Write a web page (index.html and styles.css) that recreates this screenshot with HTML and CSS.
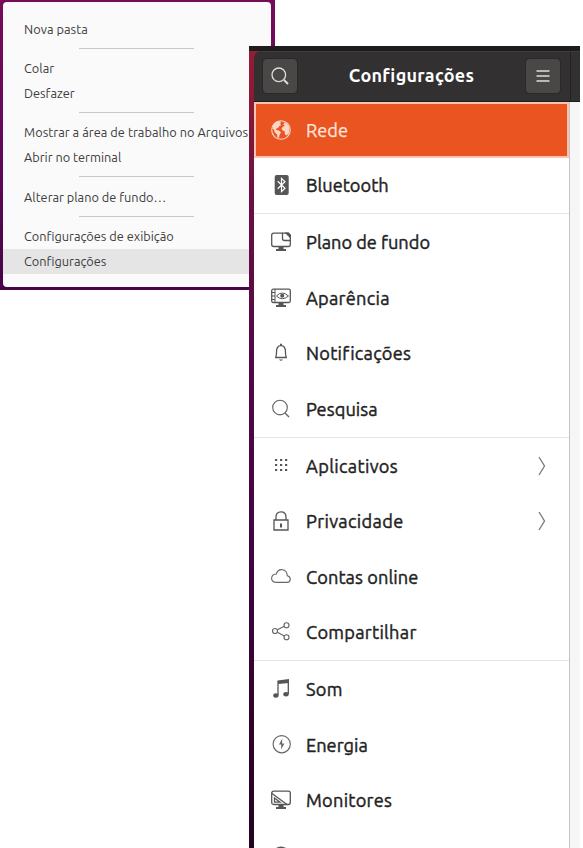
FILE: index.html
```html
<!DOCTYPE html>
<html lang="pt-BR">
<head>
<meta charset="utf-8">
<title>Configurações</title>
<link rel="stylesheet" href="styles.css">
</head>
<body>
<div class="desktop">
  <nav class="menu">
    <a class="entry s1">Nova pasta</a>
    <hr>
    <a class="entry">Colar</a>
    <a class="entry">Desfazer</a>
    <hr>
    <a class="entry s1">Mostrar a área de trabalho no Arquivos</a>
    <a class="entry">Abrir no terminal</a>
    <hr>
    <a class="entry">Alterar plano de fundo…</a>
    <hr>
    <a class="entry">Configurações de exibição</a>
    <a class="entry active">Configurações</a>
  </nav>
</div>
<div class="shot">
  <div class="topbar"></div>
  <div class="window">
    <div class="main">
      <header class="header">
        <button class="btn"><svg width="18" height="18" viewBox="0 0 18 18"><circle cx="7.800" cy="7.800" r="6.800"/><path d="M13 13l4 4" stroke-width="2"/></svg></button>
        <h1>Configurações</h1>
        <button class="btn"><svg width="14" height="14" viewBox="0 0 14 14"><path d="M.5 2h13M.5 7h13M.5 12h13" stroke-width="1.700"/></svg></button>
      </header>
      <ul class="list">
        <li class="row selected"><svg class="ico" viewBox="0 0 20 20"><circle cx="10" cy="10" r="9.300"/><path class="fill" d="M2 5L5 2l4-1 1 1.500-1 1.500 1.500 1-2 1-1.500 2-1.500.5-.5 1.500 3 .5 2 2-1.500 2.500L8 18l-1.500-.5-.5-3-2.500-2.500-.5-2.500L1.500 9zM13 2.500l3 1 2.500 4-.5 5.500-2.500 2.500-1.500-1-.5-3.500-2-.5-1-2 1.500-2 2-.5-1.500-1z"/></svg><span>Rede</span></li>
        <li class="row"><svg class="ico" viewBox="0 0 20 20"><rect class="fill" x="3.700" y="0" width="14" height="20" rx="2"/><path d="M6.700 6.300l7.300 7-3.500 3.400V3.300L14 6.700l-7.300 7" stroke="#fff" stroke-width="1.200"/></svg><span>Bluetooth</span></li>
        <li class="row first"><svg class="ico" viewBox="0 0 20 20"><path d="M11.500 1.200H2.700q-2 0-2 2v9.300q0 2 2 2h14.600q2 0 2-2V8.500"/><path class="fill" d="M13.500.6h4l2.500 2.500v4zM7.500 15h5v2H15v2H5v-2h2.500z"/><path d="M11.500.6v5.900q0 2 2 2H20M11.500 1.200h6l1.800 2v5"/></svg><span>Plano de fundo</span></li>
        <li class="row"><svg class="ico" viewBox="0 0 20 20"><rect x=".7" y="1.200" width="18.600" height="13.300" rx="1.500"/><path d="M4 1v14M1 4.500h3M1 8h3M1 11.500h3M5.500 8q5.500-6 12 0q-6.500 5.500-12 0z" stroke-width="1"/><circle class="fill" cx="11.200" cy="7.800" r="2"/><path class="fill" d="M7.500 15h5v2H15v2H5v-2h2.500z"/></svg><span class="w3">Aparência</span></li>
        <li class="row"><svg class="ico" viewBox="0 0 20 20"><path d="M4.200 14.500c1.300-.5 1.300-2 1.300-5.500 0-4 1.700-6.300 4.500-6.300s4.500 2.300 4.500 6.300c0 3.500 0 5 1.300 5.500z"/><path class="fill" d="M9 .7h2v2H9zM8 16.500h4q-2 2.500-4 0z"/></svg><span class="w3">Notificações</span></li>
        <li class="row"><svg class="ico thin" viewBox="0 0 20 20"><circle cx="9" cy="8.500" r="7.300"/><path d="M14 14l4 4" stroke-width="1.500"/></svg><span class="w1">Pesquisa</span></li>
        <li class="row first"><svg class="ico" viewBox="0 0 20 20"><path class="fill" d="M4 2.900h2.200v2.200H4zM9 2.900h2.200v2.200H9zM14 2.900h2.200v2.200H14zM4 7.900h2.200v2.200H4zM9 7.900h2.200v2.200H9zM14 7.900h2.200v2.200H14zM4 12.900h2.200v2.200H4zM9 12.900h2.200v2.200H9zM14 12.900h2.200v2.200H14z"/></svg><span class="w4">Aplicativos</span><svg class="chev" viewBox="0 0 8 20"><path d="M1 1l5.500 9L1 19"/></svg></li>
        <li class="row"><svg class="ico" viewBox="0 0 20 20"><path d="M3 9h14v10H3zM5 9V6Q5 .8 10 .8T15 6v3"/><path class="fill" d="M9 12.500h2v4H9z"/></svg><span class="w4">Privacidade</span><svg class="chev" viewBox="0 0 8 20"><path d="M1 1l5.500 9L1 19"/></svg></li>
        <li class="row"><svg class="ico thin" viewBox="0 0 20 20"><path d="M4.500 15.300h11.500c4 0 4.500-5.500.3-6.500C16 1 7 1 5.300 7-.5 7-1 15 4.500 15.300z"/></svg><span class="w1">Contas online</span></li>
        <li class="row"><svg class="ico thin" viewBox="0 0 20 20"><circle cx="4" cy="9" r="2.500"/><circle cx="15.500" cy="3.200" r="2.500"/><circle cx="15.500" cy="15.200" r="2.500"/><path d="M6.500 7.800l6.700-3.500M6.500 10.300l6.700 3.600"/></svg><span class="w3">Compartilhar</span></li>
        <li class="row first"><svg class="ico" viewBox="0 0 20 20"><path class="fill" d="M6.500 1.500L18 0v4L7.500 5z"/><path d="M7 2v14M17.300 1v14"/><ellipse class="fill" cx="4.900" cy="16.500" rx="2.700" ry="2.200"/><ellipse class="fill" cx="15" cy="15.300" rx="2.700" ry="2.200"/></svg><span class="w3">Som</span></li>
        <li class="row"><svg class="ico thin" viewBox="0 0 20 20"><circle cx="10.700" cy="9.200" r="8.600"/><path class="fill" d="M11.300 3.500l-3.300 6h2.300l-.3 5 3.400-6H11z"/></svg><span>Energia</span></li>
        <li class="row"><svg class="ico" viewBox="0 0 20 20"><rect x=".7" y="1.200" width="18.600" height="13.300" rx="2"/><path d="M1 3.500l15 11M3.500 8v4.200h5.500z"/><path class="fill" d="M7.500 15h5v2H15v2H5v-2h2.500z"/></svg><span class="w3">Monitores</span></li>
        <li class="row"><svg class="ico" viewBox="0 0 20 20"><circle class="fill" cx="10" cy="9.500" r="9"/></svg><span>Mouse e touchpad</span></li>
      </ul>
    </div>
    <div class="side"><div class="sidehead"></div></div>
  </div>
</div>
</body>
</html>
```
FILE: styles.css
```css
* { box-sizing: border-box; }
body { margin: 0; width: 583px; height: 848px; overflow: hidden; background: #fff; font-family: Ubuntu, "Noto Sans", sans-serif; position: relative; }
svg { fill: none; stroke: currentColor; stroke-width: 1.3; flex: none; display: block; }
.fill { fill: currentColor; stroke: none; }
.desktop { width: 275px; height: 290px; padding: 2px 4px 3px 3px; background: linear-gradient(#770b58, #65085c 45%, #470548); }
.menu { height: 285px; padding: 14.5px 0 0; background: #fafafa; border-radius: 4px; display: flex; flex-direction: column; }
.entry { height: 24.8px; line-height: 25px; padding-left: 21px; font-size: 12.75px; color: #3d3d3d; white-space: nowrap; flex: none; }
.entry.active { background: #e5e5e5; }
.s1 { letter-spacing: .05px; }
.menu hr { width: 115px; height: 1px; flex: none; margin: 6.5px 0 7.2px 76px; border: 0; background: #c8c8c8; }
.shot { position: absolute; left: 249px; top: 46px; width: 331px; height: 802px; overflow: hidden; padding-left: 5px; background: linear-gradient(#951c35, #8a1a38 7%, #6a0e45 20%, #520846 40%, #400440 65%, #24031f); }
.topbar { height: 5px; margin-left: -5px; background: #1d1d1d; }
.window { display: flex; height: 797px; background: linear-gradient(#323030 50px, #fff 50px); border-radius: 8px 0 0 0; overflow: hidden; }
.main { width: 316px; }
.header { height: 50.6px; display: flex; align-items: center; justify-content: space-between; padding: 0 10px 1px 9px; background: #323030; border-top: 1px solid #3f3d3c; border-bottom: 1px solid #1f1e1e; }
.btn { width: 34px; height: 34px; padding: 0; border: 0; border-radius: 4px; background: #4a4846; color: #deddda; display: grid; place-items: center; box-shadow: 0 0 0 1px #2a2828; }
.header h1 { margin: 0 0 2px; font-size: 18px; letter-spacing: .27px; color: #fff; }
.list { margin: 0; padding: 0; list-style: none; width: 316px; border-right: 1px solid #c4c4c4; }
.row { height: 55.6px; display: flex; align-items: center; padding: 0 23px 0 17px; font-size: 18.2px; color: #222; white-space: nowrap; }
.row span { margin-left: 15px; -webkit-text-stroke: .42px currentColor; }
.row .w1 { letter-spacing: .08px; }
.row .w3 { letter-spacing: .27px; }
.row .w4 { letter-spacing: .34px; }
.row.first { height: 56.7px; border-top: 1px solid #e4e4e4; }
.row.selected { height: 56px; background: #e95420; color: #fbe5dc; border: 2px solid #fac5b0; padding-left: 15px; }
.row.selected span { -webkit-text-stroke-width: .25px; }
.ico { width: 20px; height: 20px; color: #565656; }
.thin { stroke-width: 1.15; color: #666; }
.selected .ico { color: #fbd5c6; stroke-width: 1.1; }
.chev { width: 8px; height: 20px; margin-left: auto; color: #777; }
.side { flex: 1; background: #f6f6f6; }
.sidehead { height: 50.6px; background: #323030; border-left: 1px solid #222; border-top: 1px solid #3f3d3c; border-bottom: 1px solid #1f1e1e; }
```
